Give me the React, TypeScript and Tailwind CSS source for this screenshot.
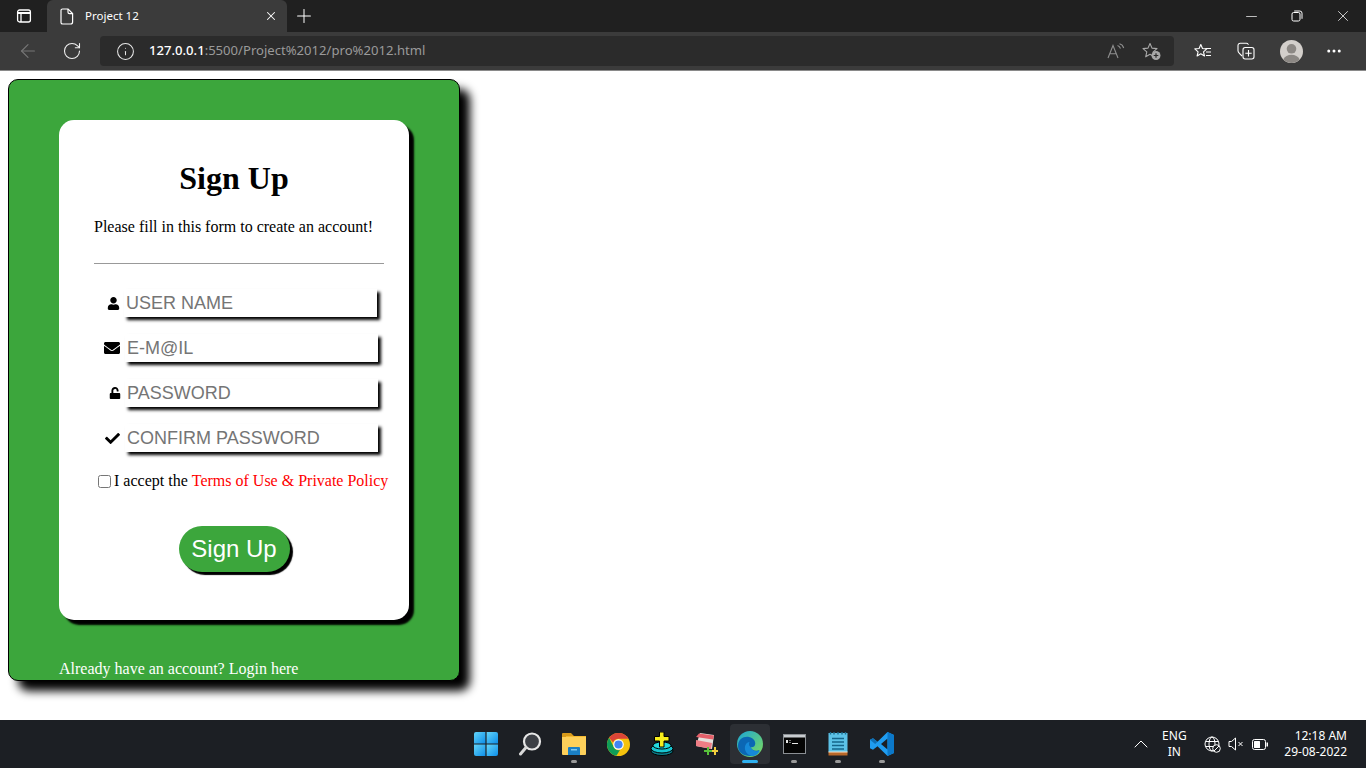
import { FaUser, FaEnvelope, FaUnlock, FaCheck } from 'react-icons/fa';
import { Info, ArrowLeft, RotateCw, Plus, X, Minus, ChevronUp, Ellipsis } from 'lucide-react';

const uiFont = "font-['Noto_Sans','Open_Sans',sans-serif]";

function SidebarIcon() {
  return (
    <svg width="16" height="16" viewBox="0 0 16 16" fill="none" stroke="#fff" strokeWidth="1.3">
      <rect x="1.6" y="2" width="12.8" height="12" rx="2" />
      <path d="M1.6 5h12.8" strokeWidth="2" />
      <path d="M5 5v9" />
    </svg>
  );
}

function PageIcon() {
  return (
    <svg width="14" height="17" viewBox="0 0 14 17" fill="none" stroke="#fff" strokeWidth="1.2">
      <path d="M2.5 1h5.6L12.6 5.5V14a2 2 0 0 1-2 2h-8a1.6 1.6 0 0 1-1.6-1.6V2.5A1.5 1.5 0 0 1 2.5 1Z" />
      <path d="M8 1v3.2A1.4 1.4 0 0 0 9.4 5.6h3.2" />
    </svg>
  );
}

function RestoreIcon() {
  return (
    <svg width="12" height="12" viewBox="0 0 12 12" fill="none" stroke="#fff" strokeWidth="1">
      <rect x="1" y="2.5" width="8" height="8.5" rx="1.6" />
      <path d="M3.2 1h5.6A2.2 2.2 0 0 1 11 3.2v5.6" />
    </svg>
  );
}

function ReadAloudIcon() {
  return (
    <svg width="18" height="16" viewBox="0 0 18 16" fill="none" stroke="#8f8f8f" strokeWidth="1.1">
      <path d="M1 15 6 2.5 11 15M2.8 10.8h6.4" />
      <path d="M10.5 2.5c1.6.5 2.5 1.6 3 3M12.5.8c2.2.6 3.6 2.2 4.2 4.2" />
    </svg>
  );
}

function StarAddIcon() {
  return (
    <svg width="20" height="19" viewBox="0 0 20 19" fill="none">
      <path d="M8 1.5l2 4.6 5 .5-3.8 3.3 1.1 4.9L8 12.2l-4.3 2.6 1.1-4.9L1 6.6l5-.5Z" stroke="#a8a8a8" strokeWidth="1.1" strokeLinejoin="round" />
      <circle cx="14" cy="13.5" r="4.5" fill="#a8a8a8" />
      <path d="M14 11.2v4.600M11.700 13.500h4.600" stroke="#2b2b2b" strokeWidth="1.2" />
    </svg>
  );
}

function FavoritesIcon() {
  return (
    <svg width="18" height="17" viewBox="0 0 18 17" fill="none" stroke="#fff" strokeWidth="1.1">
      <path d="M6.8 1.5l1.7 4 4.3.4-3.3 2.9 1 4.2-3.7-2.3-3.7 2.3 1-4.2L.8 5.900l4.300-.4Z" strokeLinejoin="round" />
      <path d="M11.500 5.500h5.500M12 9h5M12 12.500h5" />
    </svg>
  );
}

function CollectionsIcon() {
  return (
    <svg width="18" height="18" viewBox="0 0 18 18" fill="none" stroke="#fff" strokeWidth="1.1">
      <path d="M11.500 2.600 11 2a1.800 1.800 0 0 0-1.500-.8H3.200A2.200 2.200 0 0 0 1 3.400v5.400c0 1 .5 1.800 1.400 2.600L5 14" />
      <rect x="6" y="5.500" width="11" height="11.500" rx="2.200" />
      <path d="M11.500 8v6.500M8.300 11.200h6.400" />
    </svg>
  );
}

function AvatarIcon() {
  return (
    <svg width="23" height="23" viewBox="0 0 23 23">
      <circle cx="11.500" cy="11.500" r="11.500" fill="#d3cfcb" />
      <circle cx="11.500" cy="8.800" r="4.800" fill="#8c8884" />
      <path d="M3.300 19.500c1.500-3.200 4.600-4.700 8.200-4.700s6.700 1.500 8.200 4.700A11.500 11.500 0 0 1 11.500 23a11.500 11.500 0 0 1-8.200-3.500Z" fill="#8c8884" />
    </svg>
  );
}

function StartIcon() {
  return (
    <svg width="24" height="24" viewBox="0 0 24 24">
      <defs>
        <linearGradient id="win" x1="0" y1="0" x2="1" y2="1">
          <stop offset="0" stopColor="#63d4f8" />
          <stop offset="1" stopColor="#0d8ee9" />
        </linearGradient>
      </defs>
      <path d="M2 0h9.400v11.400H0V2a2 2 0 0 1 2-2Z" fill="url(#win)" />
      <path d="M12.600 0H22a2 2 0 0 1 2 2v9.400H12.600Z" fill="url(#win)" />
      <path d="M0 12.600h11.400V24H2a2 2 0 0 1-2-2Z" fill="url(#win)" />
      <path d="M12.600 12.600H24V22a2 2 0 0 1-2 2h-9.400Z" fill="url(#win)" />
    </svg>
  );
}

function SearchIcon() {
  return (
    <svg width="24" height="24" viewBox="0 0 24 24" fill="none">
      <circle cx="14" cy="9.500" r="8" fill="#3c3f45" stroke="#e6e6e6" strokeWidth="2.200" />
      <path d="M8 15.500 2.500 22" stroke="#d8d8d8" strokeWidth="3" strokeLinecap="round" />
    </svg>
  );
}

function FolderIcon() {
  return (
    <svg width="24" height="22" viewBox="0 0 24 22">
      <path d="M1 0h8l3 3h11a1 1 0 0 1 1 1v4H0V1a1 1 0 0 1 1-1Z" fill="#d79a1a" />
      <path d="M0 4h24v17a1 1 0 0 1-1 1H1a1 1 0 0 1-1-1Z" fill="#fdd05a" />
      <path d="M4 3.500h20" stroke="#f5b92f" strokeWidth="1" />
      <path d="M6 15a1 1 0 0 1 1-1h10a1 1 0 0 1 1 1v7H6Z" fill="#1a7fc4" />
      <rect x="9" y="16" width="6" height="1.500" fill="#7cc7ef" />
    </svg>
  );
}

function ChromeIcon() {
  return (
    <svg width="23" height="23" viewBox="0 0 24 24">
      <circle cx="12" cy="12" r="12" fill="#f4c20d" />
      <path d="M12 0a12 12 0 0 1 10.400 6H12a6 6 0 0 0-5.600 3.800L2.200 5A12 12 0 0 1 12 0Z" fill="#db4437" />
      <path d="M2.200 5l4.800 9.500a6 6 0 0 0 6.500 3.300L9.800 23.800A12 12 0 0 1 2.200 5Z" fill="#0f9d58" />
      <circle cx="12" cy="12" r="5.500" fill="#fff" />
      <circle cx="12" cy="12" r="4.300" fill="#4285f4" />
    </svg>
  );
}

function InstallerIcon() {
  return (
    <svg width="24" height="24" viewBox="0 0 24 24">
      <ellipse cx="12" cy="19" rx="11" ry="4.500" fill="#0b7f8c" stroke="#000" />
      <ellipse cx="12" cy="16.500" rx="11" ry="4.500" fill="#18c5d0" stroke="#000" />
      <ellipse cx="12" cy="13.500" rx="9" ry="3.500" fill="#25dbe0" stroke="#000" />
      <path d="M9.500 0h4.500v4.500h5v4.500h-5v6H9.500V9h-5V4.500h5Z" fill="#f8ee1c" stroke="#000" />
    </svg>
  );
}

function NotepadPlusIcon() {
  return (
    <svg width="24" height="24" viewBox="0 0 24 24">
      <path d="M6 1 20 3l-2 14-16-3Z" fill="#e5e0dc" />
      <path d="M5 1.500 20 3.500l-1 4L2 5Z" fill="#e4606a" />
      <path d="M2 8l16 3-1 6-15-3Z" fill="#ee7d85" />
      <path d="M13 18h3v-3h2v3h3v2h-3v3h-2v-3h-3Z" fill="#58c13a" transform="translate(-3 0)" />
      <path d="M18 18h2v-3h2v3h2v2h-2v3h-2v-3h-2Z" fill="#f3cf3d" />
    </svg>
  );
}

function EdgeIcon() {
  return (
    <svg width="26" height="26" viewBox="0 0 26 26">
      <defs>
        <linearGradient id="edgeTop" x1="0" y1="0" x2="1" y2="1">
          <stop offset="0" stopColor="#1aa6d8" />
          <stop offset="1" stopColor="#7fdc58" />
        </linearGradient>
      </defs>
      <circle cx="13" cy="13" r="13" fill="url(#edgeTop)" />
      <path d="M1 15C1 8 7 5 12 6c5 1 7 5 6 8-.7 2-3 2.500-4.500 2 1 3 5 5 9 3-2.500 4-6 6-9.500 6C6 25 1 21 1 15Z" fill="#0b67b4" />
      <path d="M13.500 16c-1.500-1-2-3-1-5-4 .5-5.500 5-4 9 1 2.500 3.500 4.500 6 5 3.500.2 6.500-1.500 8.500-5.500-4 2-8.500 0-9.500-3.500Z" fill="#1689d8" />
    </svg>
  );
}

function TerminalIcon() {
  return (
    <svg width="23" height="20" viewBox="0 0 23 20">
      <rect x="0.500" y="0.500" width="22" height="19" fill="#050505" stroke="#8b8f94" />
      <rect x="1" y="1" width="21" height="2.500" fill="#c8ccd0" />
      <path d="M3 6h2v3H3ZM6.500 6h1v1h-1ZM6.500 8h1v1h-1ZM9 9h6v1H9Z" fill="#e8e8e8" />
    </svg>
  );
}

function NotepadIcon() {
  return (
    <svg width="20" height="24" viewBox="0 0 20 24">
      <rect x="0.500" y="1" width="19" height="19" fill="#5cc2e7" />
      <rect x="0.500" y="20" width="19" height="3.500" fill="#b8682a" />
      <rect x="0.500" y="19.500" width="19" height="1" fill="#f1e3cf" />
      <path d="M2.500 0v2.500M6 0v2.500M10 0v2.500M14 0v2.500M17.500 0v2.500" stroke="#1d6d90" strokeWidth="1.400" />
      <path d="M4 6.500h12M4 10h12M4 13.500h12M4 17h12" stroke="#15658a" strokeWidth="1.400" />
    </svg>
  );
}

function VsCodeIcon() {
  return (
    <svg width="24" height="24" viewBox="0 0 24 24">
      <path d="M17.500 0 24 3v18l-6.500 3L7.500 14.300l-4.500 3.500L0 16.300v-8.600l3-1.500 4.500 3.500Zm0 6.500L11 12l6.500 5.500Z" fill="#1f9cf0" />
      <path d="M17.500 0 24 3v18l-6.500 3Z" fill="#0b78c9" />
      <path d="M0 7.700 3 6.200 7.500 9.700 5.200 12Z" fill="#0e6fb5" />
    </svg>
  );
}

function NetworkIcon() {
  return (
    <svg width="17" height="17" viewBox="0 0 17 17" fill="none" stroke="#fff" strokeWidth="1">
      <circle cx="8" cy="8" r="7" />
      <ellipse cx="8" cy="8" rx="3" ry="7" />
      <path d="M1.500 5.500h13M1.500 10.500h8" />
      <circle cx="12.500" cy="12.500" r="3.800" fill="#1c1f24" />
      <path d="M10 15l5-5" />
    </svg>
  );
}

function MuteIcon() {
  return (
    <svg width="16" height="14" viewBox="0 0 16 14" fill="none" stroke="#fff" strokeWidth="1">
      <path d="M1 4.500h2.500L7.500 1v12L3.500 9.500H1Z" />
      <path d="M10.500 5l4 4M14.500 5l-4 4" />
    </svg>
  );
}

function BatteryIcon() {
  return (
    <svg width="16" height="11" viewBox="0 0 16 11" fill="none">
      <rect x="0.500" y="0.500" width="13" height="10" rx="2" stroke="#fff" />
      <rect x="2" y="2" width="6" height="7" rx="0.500" fill="#fff" />
      <rect x="14.500" y="3.500" width="1.500" height="4" fill="#fff" />
    </svg>
  );
}

function BrowserChrome() {
  return (
    <div className={uiFont}>
      <div className="flex h-8 items-end bg-[#202020]">
        <div className="flex h-8 w-[47px] items-center justify-center">
          <SidebarIcon />
        </div>
        <div className="flex h-8 w-[240px] items-center rounded-t-md bg-[#3b3b3b] pl-[13px] pr-[9px]">
          <PageIcon />
          <span className="ml-[11px] flex-1 text-[11.5px] text-white">Project 12</span>
          <X size={14} color="#fff" strokeWidth={1.8} />
        </div>
        <div className="flex h-8 w-[34px] items-center justify-center">
          <Plus size={22} color="#fff" strokeWidth={1.1} />
        </div>
        <div className="flex-1" />
        <div className="flex h-8 items-center">
          <div className="flex w-[46px] justify-center"><Minus size={17} color="#fff" strokeWidth={1} /></div>
          <div className="flex w-[46px] justify-center"><RestoreIcon /></div>
          <div className="flex w-[46px] justify-center"><X size={18} color="#fff" strokeWidth={1} /></div>
        </div>
      </div>
      <div className="flex h-[38px] items-center bg-[#3b3b3b]">
        <div className="flex w-[56px] justify-center"><ArrowLeft size={22} color="#777" strokeWidth={1.2} /></div>
        <div className="flex w-[32px] justify-center"><RotateCw size={20} color="#f0f0f0" strokeWidth={1.3} /></div>
        <div className="ml-3 flex h-[30px] w-[1074px] items-center rounded bg-[#2b2b2b] pl-4 pr-3">
          <Info size={19} color="#e8e8e8" strokeWidth={1.3} />
          <span className="ml-[14px] flex-1 text-[13.1px]">
            <span className="font-medium text-white">127.0.0.1</span>
            <span className="text-[#9a9a9a]">:5500/Project%2012/pro%2012.html</span>
          </span>
          <ReadAloudIcon />
          <div className="ml-[17px]"><StarAddIcon /></div>
        </div>
        <div className="ml-[19px] flex w-[19px] justify-center"><FavoritesIcon /></div>
        <div className="ml-[25px]"><CollectionsIcon /></div>
        <div className="ml-[25px]"><AvatarIcon /></div>
        <div className="ml-[22px]"><Ellipsis size={18} color="#fff" strokeWidth={2} /></div>
      </div>
      <div className="h-px bg-[#8a8a8a]" />
    </div>
  );
}

const fields = [
  { icon: <FaUser size={13} />, placeholder: 'USER NAME', type: 'text', iconGap: 'mr-1', margin: 'mr-px' },
  { icon: <FaEnvelope size={16} />, placeholder: 'E-M@IL', type: 'email', iconGap: 'mr-[5px]', margin: '' },
  { icon: <FaUnlock size={12} />, placeholder: 'PASSWORD', type: 'password', iconGap: 'mr-1', margin: '' },
  { icon: <FaCheck size={15} />, placeholder: 'CONFIRM PASSWORD', type: 'password', iconGap: 'mr-[5px]', margin: '' },
];

function SignUpForm() {
  return (
    <div className="ml-[50px] mt-[40px] h-[500px] w-[350px] rounded-[15px] bg-white pl-[35px] pr-[25px] pt-10 shadow-[5px_5px_2px_#000]">
      <h1 className="w-[280px] text-center text-[32px] font-bold leading-[37px] text-black">Sign Up</h1>
      <p className="mt-[21px] text-base leading-[18px] text-black">Please fill in this form to create an account!</p>
      <hr className="mt-[27px] border-t border-[#999]" />
      <div className="mt-[25px] flex w-[284px] flex-col gap-[17px]">
        {fields.map(f => (
          <div key={f.placeholder} className="flex h-[28px] items-center justify-end">
            <span className={`${f.iconGap} text-black`}>{f.icon}</span>
            <input
              type={f.type}
              placeholder={f.placeholder}
              className={`${f.margin} h-[28px] w-[253px] bg-white px-[2px] font-['Liberation_Sans',Arial,sans-serif] text-lg outline-none shadow-[3px_3px_3px_#000] placeholder:text-[#757575]`}
            />
          </div>
        ))}
      </div>
      <label className="mt-[20px] flex h-[18px] items-center whitespace-nowrap pl-1 text-base leading-[18px] text-black">
        <input type="checkbox" className="mr-[3px] size-[13px] appearance-auto" />
        I accept the&nbsp;<span className="text-[#ff0000]">Terms of Use &amp; Private Policy</span>
      </label>
      <div className="mt-[36px] flex justify-center">
        <button className="ml-[-10px] h-[46px] w-[111px] rounded-full bg-[#3ca63c] font-['Liberation_Sans',Arial,sans-serif] text-2xl text-white shadow-[3px_3px_1px_#000]">
          Sign Up
        </button>
      </div>
    </div>
  );
}

function Taskbar() {
  const apps = [
    { el: <StartIcon /> },
    { el: <SearchIcon /> },
    { el: <FolderIcon />, dot: true },
    { el: <ChromeIcon /> },
    { el: <InstallerIcon /> },
    { el: <NotepadPlusIcon /> },
    { el: <EdgeIcon />, active: true },
    { el: <TerminalIcon />, dot: true },
    { el: <NotepadIcon />, dot: true },
    { el: <VsCodeIcon />, dot: true },
  ];
  return (
    <div className={`${uiFont} flex h-12 items-center bg-[#1c1f24] text-white`}>
      <div className="ml-[464px] flex">
        {apps.map((a, i) => (
          <div
            key={i}
            className={`relative mx-0.5 flex h-10 w-10 items-center justify-center rounded ${a.active ? 'bg-[#2c2f34]' : ''}`}
          >
            {a.el}
            {a.dot && <span className="absolute bottom-[1px] h-[3px] w-[6px] rounded-full bg-[#9a9a9a]" />}
            {a.active && <span className="absolute bottom-[1px] h-[3px] w-4 rounded-full bg-[#2fb1f0]" />}
          </div>
        ))}
      </div>
      <div className="flex-1" />
      <ChevronUp size={24} strokeWidth={1} />
      <div className="ml-2 w-[26px] text-center text-xs leading-4">
        <div>ENG</div>
        <div>IN</div>
      </div>
      <div className="ml-[17px]"><NetworkIcon /></div>
      <div className="ml-[7px]"><MuteIcon /></div>
      <div className="ml-[8px]"><BatteryIcon /></div>
      <div className="ml-4 mr-[19px] text-right text-xs leading-4">
        <div>12:18 AM</div>
        <div>29-08-2022</div>
      </div>
    </div>
  );
}

export default function App() {
  return (
    <div className="flex h-screen w-full flex-col overflow-hidden bg-white font-['Liberation_Serif','Times_New_Roman',serif]">
      <BrowserChrome />
      <div className="flex-1 p-2">
        <div className="h-[602px] w-[452px] rounded-[10px] border border-black bg-[#3ca63c] shadow-[10px_10px_10px_#000]">
          <SignUpForm />
          <p className="ml-[50px] mt-[40px] text-base leading-[18px] text-white">Already have an account? Login here</p>
        </div>
      </div>
      <Taskbar />
    </div>
  );
}
